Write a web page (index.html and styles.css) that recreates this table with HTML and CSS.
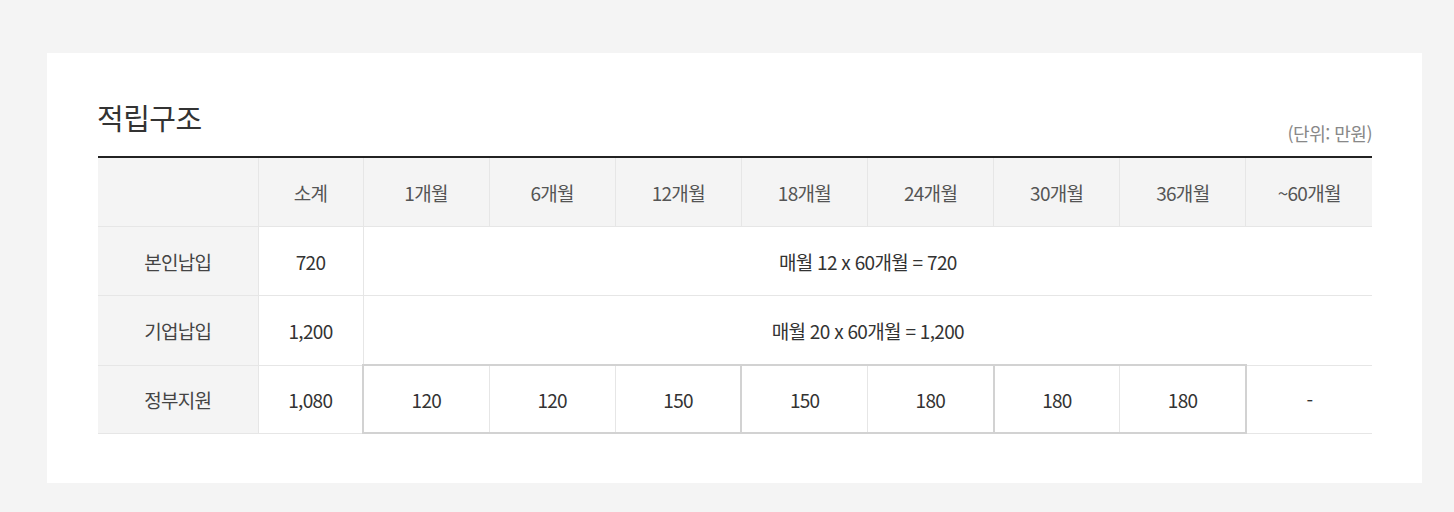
FILE: index.html
```html
<!DOCTYPE html>
<html lang="ko">
<head>
<meta charset="utf-8">
<title>적립구조</title>
<link rel="stylesheet" href="styles.css">
</head>
<body>
<div class="page">
  <section class="card">
    <div class="card-head">
      <h2 class="title">적립구조</h2>
      <span class="unit">(단위: 만원)</span>
    </div>
    <table class="plan">
      <colgroup>
        <col class="c-label"><col class="c-sum">
        <col><col><col><col><col><col><col><col>
      </colgroup>
      <thead>
        <tr>
          <th class="corner"></th>
          <th>소계</th>
          <th>1개월</th>
          <th>6개월</th>
          <th>12개월</th>
          <th>18개월</th>
          <th>24개월</th>
          <th>30개월</th>
          <th>36개월</th>
          <th>~60개월</th>
        </tr>
      </thead>
      <tbody>
        <tr>
          <th class="row-h">본인납입</th>
          <td>720</td>
          <td colspan="8">매월 12 x 60개월 = 720</td>
        </tr>
        <tr>
          <th class="row-h">기업납입</th>
          <td>1,200</td>
          <td colspan="8">매월 20 x 60개월 = 1,200</td>
        </tr>
        <tr class="gov">
          <th class="row-h">정부지원</th>
          <td>1,080</td>
          <td class="g g-start">120</td>
          <td class="g">120</td>
          <td class="g g-end">150</td>
          <td class="g">150</td>
          <td class="g g-end">180</td>
          <td class="g">180</td>
          <td class="g g-end">180</td>
          <td>-</td>
        </tr>
      </tbody>
    </table>
  </section>
</div>
</body>
</html>
```
FILE: styles.css
```css
html, body {
  margin: 0;
  padding: 0;
  background: #f4f4f4;
}
body {
  font-family: "Noto Sans CJK KR", "Noto Sans", sans-serif;
  color: #333;
}
.page {
  padding: 53px 0 0 47px;
}
.card {
  width: 1375px;
  height: 430px;
  box-sizing: border-box;
  background: #fff;
  padding: 0 50px 0 51px;
}
.card-head {
  display: flex;
  justify-content: space-between;
  align-items: flex-end;
  height: 103px;
  box-sizing: border-box;
}
.title {
  margin: 0 0 19px -1px;
  font-size: 29px;
  font-weight: 400;
  line-height: 40px;
  color: #333;
  letter-spacing: -0.5px;
}
.unit {
  font-size: 18px;
  line-height: 22px;
  color: #888;
  margin-bottom: 12px;
  letter-spacing: -0.5px;
}
.plan {
  width: 1274px;
  border-collapse: collapse;
  table-layout: fixed;
  border-top: 2px solid #222;
  font-size: 19px;
  letter-spacing: -0.7px;
}
.c-label { width: 160px; }
.c-sum { width: 105px; }
.plan th, .plan td {
  height: 68px;
  padding: 0;
  text-align: center;
  vertical-align: middle;
  border: 1px solid #e6e6e6;
  border-left: none;
  border-right: none;
}
.plan thead th {
  background: #f4f4f4;
  font-weight: 400;
  color: #555;
  border-left: 1px solid #e6e6e6;
  border-top: none;
}
.plan thead th:first-child {
  border-left: none;
}
.plan td {
  font-weight: 400;
  color: #333;
  border-left: 1px solid #e6e6e6;
}
.plan .row-h {
  background: #f4f4f4;
  font-weight: 400;
  color: #444;
}
.gov th, .gov td {
  height: 66px;
}
.gov .g {
  border-top: 2px solid #d2d2d2;
  border-bottom: 2px solid #d2d2d2;
}
.gov .g-start {
  border-left: 2px solid #d2d2d2;
}
.gov .g-end {
  border-right: 2px solid #d2d2d2;
}
.gov .g-end + td {
  border-left: 2px solid #d2d2d2;
}
```
